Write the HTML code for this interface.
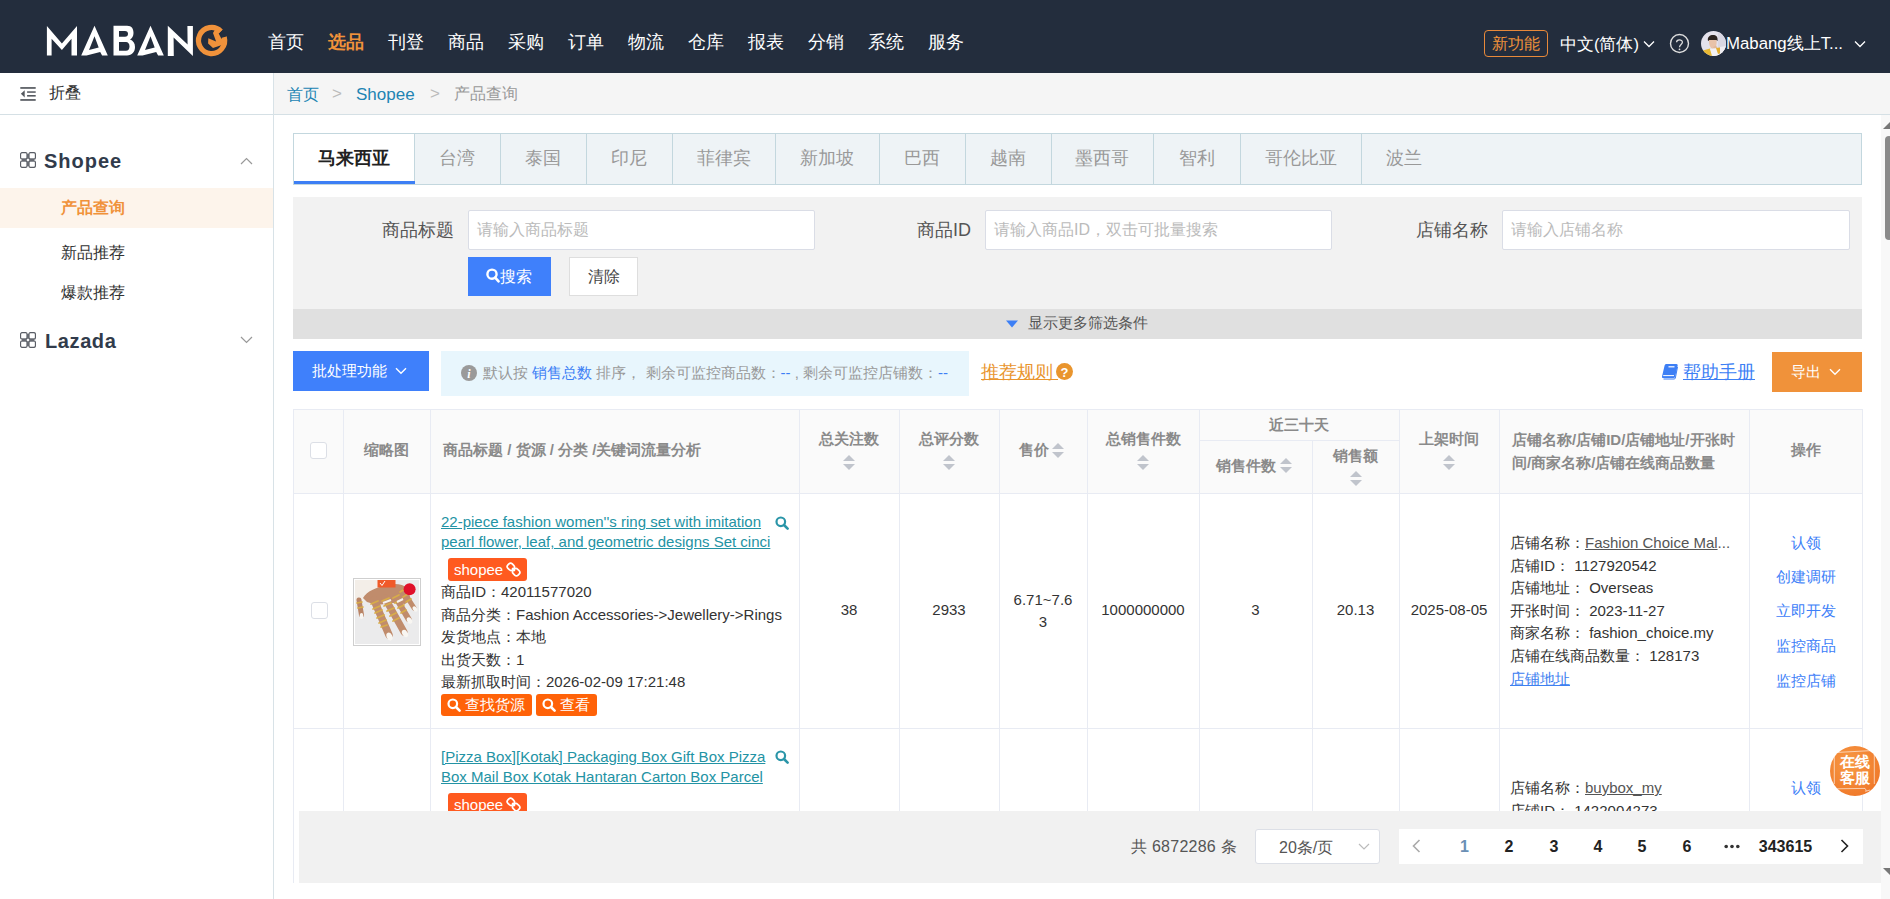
<!DOCTYPE html>
<html><head><meta charset="utf-8">
<style>
*{box-sizing:border-box;margin:0;padding:0}
html,body{width:1890px;height:899px;overflow:hidden;background:#fff;font-family:"Liberation Sans",sans-serif;color:#333}
.a{position:absolute;white-space:nowrap}
#hdr{position:absolute;left:0;top:0;width:1890px;height:73px;background:#232d3d}
.nav{position:absolute;top:30px;font-size:18px;line-height:24px;color:#fff}
.nav.on{color:#f0923a;font-weight:bold}
#side{position:absolute;left:0;top:73px;width:274px;height:826px;background:#fff;border-right:1px solid #d8e2e7}
#bc{position:absolute;left:274px;top:73px;width:1616px;height:42px;background:#f5f5f5;border-bottom:1px solid #d5e0e5}
</style></head><body>

<div id="hdr">
  <svg class="a" style="left:0;top:0" width="240" height="73" viewBox="0 0 240 73">
    <g fill="#fff">
      <polygon points="46.9,26.1 61.9,43.6 77,26.1 77,55.5 71.5,55.5 71.5,38.8 61.9,49.9 51.6,38.8 51.6,55.5 46.9,55.5"/>
      <path fill-rule="evenodd" d="M94.5,25.8 L81.2,55.4 L86.5,55.4 L100.2,52.1 L102.1,55.4 L107.8,55.4 Z M94.5,36.2 L89,49.9 L98.7,47.4 Z"/>
      <path fill-rule="evenodd" d="M113.5,25.8 H127 C132,25.8 133.5,29 133.5,33 C133.5,36 132,38.5 130,39.5 C133,40.5 135,43 135,47 C135,52 132,55.4 127,55.4 H113.5 Z M119,30.9 V36.8 H125 C127,36.8 128,35.5 128,33.8 C128,32 127,30.9 125,30.9 Z M119,42 V50.7 H126 C128,50.7 129.5,49 129.5,46.4 C129.5,43.6 128,42 126,42 Z"/>
      <path fill-rule="evenodd" d="M150.5,25.8 L137.2,55.4 L142.5,55.4 L156.2,52.1 L158.1,55.4 L163.8,55.4 Z M150.5,36.2 L145,49.9 L154.7,47.4 Z"/>
      <polygon points="167.8,25.8 187.6,44.5 187.4,26 192.9,26 192.9,56 173.6,37.4 173.8,56 167.8,56"/>
    </g>
    <path d="M224.25,37.1 A13.1,13.1 0 1 1 220.86,31.24" fill="none" stroke="#f0923b" stroke-width="5.2"/>
    <polygon fill="#f0923b" points="214.7,30 222.7,29.6 218.7,33.4 221.4,38.7 226.7,36.5 221.9,44.9 213,48 208.1,43.6 208.3,38.2 216.1,41.4 213,32.9"/>
  </svg>
  <div class="nav" style="left:268px">首页</div>
  <div class="nav on" style="left:328px">选品</div>
  <div class="nav" style="left:388px">刊登</div>
  <div class="nav" style="left:448px">商品</div>
  <div class="nav" style="left:508px">采购</div>
  <div class="nav" style="left:568px">订单</div>
  <div class="nav" style="left:628px">物流</div>
  <div class="nav" style="left:688px">仓库</div>
  <div class="nav" style="left:748px">报表</div>
  <div class="nav" style="left:808px">分销</div>
  <div class="nav" style="left:868px">系统</div>
  <div class="nav" style="left:928px">服务</div>

  <div class="a" style="left:1484px;top:30px;width:64px;height:27px;border:1px solid #e8893a;border-radius:4px;color:#f0923a;font-size:16px;line-height:25px;text-align:center">新功能</div>
  <div class="a" style="left:1560px;top:32px;font-size:16.5px;line-height:24px;color:#fff">中文(简体)</div>
  <svg class="a" style="left:1643px;top:40px" width="12" height="8" viewBox="0 0 12 8"><path d="M1,1.5 L6,6.5 L11,1.5" fill="none" stroke="#fff" stroke-width="1.3"/></svg>
  <svg class="a" style="left:1669px;top:33px" width="21" height="21" viewBox="0 0 21 21"><circle cx="10.5" cy="10.5" r="9" fill="none" stroke="#ddd" stroke-width="1.4"/><path d="M7.6,9.2 C7.6,6.2 13.4,6.2 13.4,9.2 C13.4,11.3 10.5,11.6 10.5,14.2" fill="none" stroke="#ddd" stroke-width="1.3"/><circle cx="10.5" cy="16.3" r="0.9" fill="#ddd"/></svg>
  <svg class="a" style="left:1701px;top:31px" width="25" height="25" viewBox="0 0 25 25"><defs><clipPath id="avc"><circle cx="12.5" cy="12.5" r="12.5"/></clipPath></defs><g clip-path="url(#avc)"><rect width="25" height="25" fill="#e4e2ec"/><rect x="17" y="0" width="8" height="25" fill="#d9d7e3"/><path d="M7,10 C6,5 10,3.5 13,4 C16,4.5 17,7 16.5,10 L15,9 L9,9 Z" fill="#2c2420"/><path d="M8,9 C8,14 9,17 12,18 C15,17 16,14 15.5,9 Z" fill="#e8c2a8"/><path d="M12,16 L15,14.5 L17,18 L14,19 Z" fill="#e2b898"/><path d="M0,20 L9,17.5 L12,25 L0,25 Z" fill="#e9b934"/><path d="M9,18 L16,17 L19,25 L11,25 Z" fill="#f3f1f4"/><path d="M15,17 L19,16.5 L20,22 L17,23 Z" fill="#e2ad30"/><path d="M19,16 L25,15 L25,25 L19,25 Z" fill="#efedf2"/></g></svg>
  <div class="a" style="left:1726px;top:32px;font-size:16.8px;line-height:24px;color:#fff">Mabang线上T...</div>
  <svg class="a" style="left:1854px;top:40px" width="12" height="8" viewBox="0 0 12 8"><path d="M1,1.5 L6,6.5 L11,1.5" fill="none" stroke="#fff" stroke-width="1.3"/></svg>
</div>

<div id="side">
  <svg class="a" style="left:20px;top:13px" width="16" height="16" viewBox="0 0 16 16"><g fill="#55595f"><rect x="0.3" y="1.1" width="15.4" height="1.7"/><rect x="7.1" y="5.3" width="8.6" height="1.5"/><rect x="7.1" y="9" width="8.6" height="1.6"/><rect x="0.3" y="13.1" width="15.4" height="1.7"/><polygon points="0.9,7.7 4.7,4.3 4.7,11.4"/></g></svg>
  <div class="a" style="left:49px;top:9px;font-size:16px;line-height:22px;color:#333">折叠</div>
  <div class="a" style="left:0;top:41px;width:273px;height:1px;background:#d5e0e5"></div>
  <svg class="a" style="left:20px;top:79px" width="16" height="16" viewBox="0 0 17 17"><path d="M7,2 H10 V15 H7 Z M2,7 H15 V10 H2 Z" fill="#8c8f95"/><circle cx="8.5" cy="8.5" r="1.3" fill="#fff"/><g fill="none" stroke="#5a5e66" stroke-width="1.25"><rect x="0.6" y="0.6" width="7" height="7" rx="1.8"/><rect x="9.4" y="0.6" width="7" height="7" rx="1.8"/><rect x="0.6" y="9.4" width="7" height="7" rx="1.8"/><rect x="9.4" y="9.4" width="7" height="7" rx="1.8"/></g></svg>
  <div class="a" style="left:44px;top:76px;font-size:20px;line-height:24px;font-weight:bold;color:#313b4b;letter-spacing:1px">Shopee</div>
  <svg class="a" style="left:240px;top:84px" width="13" height="8" viewBox="0 0 13 8"><path d="M1,7 L6.5,1.5 L12,7" fill="none" stroke="#999" stroke-width="1.2"/></svg>
  <div class="a" style="left:0;top:115px;width:273px;height:40px;background:#fdf4eb"></div>
  <div class="a" style="left:61px;top:124px;font-size:16px;line-height:22px;color:#f0923a;font-weight:bold">产品查询</div>
  <div class="a" style="left:61px;top:169px;font-size:16px;line-height:22px;color:#333">新品推荐</div>
  <div class="a" style="left:61px;top:209px;font-size:16px;line-height:22px;color:#333">爆款推荐</div>
  <svg class="a" style="left:20px;top:259px" width="16" height="16" viewBox="0 0 17 17"><path d="M7,2 H10 V15 H7 Z M2,7 H15 V10 H2 Z" fill="#8c8f95"/><circle cx="8.5" cy="8.5" r="1.3" fill="#fff"/><g fill="none" stroke="#5a5e66" stroke-width="1.25"><rect x="0.6" y="0.6" width="7" height="7" rx="1.8"/><rect x="9.4" y="0.6" width="7" height="7" rx="1.8"/><rect x="0.6" y="9.4" width="7" height="7" rx="1.8"/><rect x="9.4" y="9.4" width="7" height="7" rx="1.8"/></g></svg>
  <div class="a" style="left:45px;top:256px;font-size:20px;line-height:24px;font-weight:bold;color:#313b4b;letter-spacing:0.6px">Lazada</div>
  <svg class="a" style="left:240px;top:263px" width="13" height="8" viewBox="0 0 13 8"><path d="M1,1 L6.5,6.5 L12,1" fill="none" stroke="#999" stroke-width="1.2"/></svg>
</div>
<div id="bc">
  <div class="a" style="left:13px;top:11px;font-size:16px;line-height:22px;color:#2184b3">首页</div>
  <div class="a" style="left:58px;top:10px;font-size:17px;line-height:22px;color:#bbb">&gt;</div>
  <div class="a" style="left:82px;top:11px;font-size:17px;line-height:22px;color:#2184b3">Shopee</div>
  <div class="a" style="left:156px;top:10px;font-size:17px;line-height:22px;color:#bbb">&gt;</div>
  <div class="a" style="left:180px;top:10px;font-size:16px;line-height:22px;color:#999">产品查询</div>
</div>

<div class="a" style="left:293px;top:133px;width:1569px;height:52px;background:#eef3f6;border:1px solid #c3d7de"></div>
<div class="a" style="left:294px;top:134px;width:120px;height:50px;background:#fff"></div>
<div class="a" style="left:294px;top:181px;width:121px;height:3px;background:#3d7ff5;z-index:2"></div>
<div class="a" style="left:293px;top:134px;width:121px;text-align:center;font-size:18px;line-height:48px;font-weight:bold;color:#222">马来西亚</div>
<div class="a" style="left:414px;top:134px;width:1px;height:50px;background:#c3d7de"></div>
<div class="a" style="left:414px;top:134px;width:86px;text-align:center;font-size:18px;line-height:48px;color:#999">台湾</div>
<div class="a" style="left:500px;top:134px;width:1px;height:50px;background:#c3d7de"></div>
<div class="a" style="left:500px;top:134px;width:86px;text-align:center;font-size:18px;line-height:48px;color:#999">泰国</div>
<div class="a" style="left:586px;top:134px;width:1px;height:50px;background:#c3d7de"></div>
<div class="a" style="left:586px;top:134px;width:86px;text-align:center;font-size:18px;line-height:48px;color:#999">印尼</div>
<div class="a" style="left:672px;top:134px;width:1px;height:50px;background:#c3d7de"></div>
<div class="a" style="left:672px;top:134px;width:103px;text-align:center;font-size:18px;line-height:48px;color:#999">菲律宾</div>
<div class="a" style="left:775px;top:134px;width:1px;height:50px;background:#c3d7de"></div>
<div class="a" style="left:775px;top:134px;width:104px;text-align:center;font-size:18px;line-height:48px;color:#999">新加坡</div>
<div class="a" style="left:879px;top:134px;width:1px;height:50px;background:#c3d7de"></div>
<div class="a" style="left:879px;top:134px;width:86px;text-align:center;font-size:18px;line-height:48px;color:#999">巴西</div>
<div class="a" style="left:965px;top:134px;width:1px;height:50px;background:#c3d7de"></div>
<div class="a" style="left:965px;top:134px;width:86px;text-align:center;font-size:18px;line-height:48px;color:#999">越南</div>
<div class="a" style="left:1051px;top:134px;width:1px;height:50px;background:#c3d7de"></div>
<div class="a" style="left:1051px;top:134px;width:102px;text-align:center;font-size:18px;line-height:48px;color:#999">墨西哥</div>
<div class="a" style="left:1153px;top:134px;width:1px;height:50px;background:#c3d7de"></div>
<div class="a" style="left:1153px;top:134px;width:87px;text-align:center;font-size:18px;line-height:48px;color:#999">智利</div>
<div class="a" style="left:1240px;top:134px;width:1px;height:50px;background:#c3d7de"></div>
<div class="a" style="left:1240px;top:134px;width:121px;text-align:center;font-size:18px;line-height:48px;color:#999">哥伦比亚</div>
<div class="a" style="left:1361px;top:134px;width:1px;height:50px;background:#c3d7de"></div>
<div class="a" style="left:1361px;top:134px;width:86px;text-align:center;font-size:18px;line-height:48px;color:#999">波兰</div>
<div class="a" style="left:293px;top:197px;width:1569px;height:112px;background:#f2f2f2"></div>
<div class="a" style="left:382px;top:218px;font-size:18px;line-height:24px;color:#555">商品标题</div>
<div class="a" style="left:468px;top:210px;width:347px;height:40px;background:#fff;border:1px solid #dadde6;border-radius:2px"></div>
<div class="a" style="left:477px;top:219px;font-size:16px;line-height:22px;color:#bbb">请输入商品标题</div>
<div class="a" style="left:917px;top:218px;font-size:18px;line-height:24px;color:#555">商品ID</div>
<div class="a" style="left:985px;top:210px;width:347px;height:40px;background:#fff;border:1px solid #dadde6;border-radius:2px"></div>
<div class="a" style="left:994px;top:219px;font-size:16px;line-height:22px;color:#bbb">请输入商品ID，双击可批量搜索</div>
<div class="a" style="left:1416px;top:218px;font-size:18px;line-height:24px;color:#555">店铺名称</div>
<div class="a" style="left:1502px;top:210px;width:348px;height:40px;background:#fff;border:1px solid #dadde6;border-radius:2px"></div>
<div class="a" style="left:1511px;top:219px;font-size:16px;line-height:22px;color:#bbb">请输入店铺名称</div>
<div class="a" style="left:468px;top:257px;width:83px;height:39px;background:#3f80fb"></div>
<svg class="a" style="left:486px;top:268px" width="15" height="16" viewBox="0 0 15 16"><circle cx="6" cy="6.2" r="4.6" fill="none" stroke="#fff" stroke-width="2.4"/><path d="M9.2,9.6 L12.6,13.4" stroke="#fff" stroke-width="2.6" stroke-linecap="round"/></svg>
<div class="a" style="left:500px;top:266px;font-size:16px;line-height:22px;color:#fff">搜索</div>
<div class="a" style="left:569px;top:257px;width:69px;height:39px;background:#fff;border:1px solid #dedede"></div>
<div class="a" style="left:569px;top:266px;width:69px;text-align:center;font-size:16px;line-height:22px;color:#444">清除</div>
<div class="a" style="left:293px;top:309px;width:1569px;height:30px;background:#e0e0e0"></div>
<svg class="a" style="left:1006px;top:320px" width="12" height="8" viewBox="0 0 12 8"><polygon points="0,0.5 12,0.5 6,7.5" fill="#3d7ff5"/></svg>
<div class="a" style="left:1028px;top:313px;font-size:15px;line-height:20px;color:#555">显示更多筛选条件</div>
<div class="a" style="left:293px;top:351px;width:136px;height:40px;background:#3f80fb"></div>
<div class="a" style="left:312px;top:361px;font-size:15px;line-height:20px;color:#fff">批处理功能</div>
<svg class="a" style="left:395px;top:367px" width="12" height="8" viewBox="0 0 12 8"><path d="M1,1.2 L6,6.2 L11,1.2" fill="none" stroke="#fff" stroke-width="1.4"/></svg>
<div class="a" style="left:441px;top:351px;width:528px;height:45px;background:#e8f6fd"></div>
<svg class="a" style="left:461px;top:365px" width="16" height="16" viewBox="0 0 16 16"><circle cx="8" cy="8" r="8" fill="#9a9a9a"/><text x="8" y="12.8" font-size="12" font-weight="bold" font-style="italic" text-anchor="middle" fill="#fff" font-family="Liberation Serif">i</text></svg>
<div class="a" style="left:483px;top:363px;font-size:15px;line-height:20px;color:#999">默认按 <span style="color:#3d7ff5">销售总数</span> 排序， 剩余可监控商品数：<span style="color:#3d7ff5">--</span> , 剩余可监控店铺数：<span style="color:#3d7ff5">--</span></div>
<div class="a" style="left:981px;top:361px;font-size:18px;line-height:22px;color:#e9952e;text-decoration:underline">推荐规则&nbsp;</div>
<svg class="a" style="left:1056px;top:363px" width="17" height="17" viewBox="0 0 17 17"><circle cx="8.5" cy="8.5" r="8.5" fill="#e9952e"/><text x="8.5" y="13.5" font-size="13" font-weight="bold" text-anchor="middle" fill="#fff" font-family="Liberation Sans">?</text></svg>
<svg class="a" style="left:1661px;top:363px" width="18" height="17" viewBox="0 0 18 17"><path d="M5,1 H15.5 Q17,1 16.7,2.5 L14.2,13.5 Q13.9,15 12.5,15 H2 Q0.6,15 1,13.5 L3.6,2.5 Q4,1 5,1 Z" fill="#3d7ff5"/><path d="M7.5,3.8 H13.5" stroke="#fff" stroke-width="1.2"/><path d="M2.2,12.6 H13" stroke="#fff" stroke-width="1"/><path d="M16.5,4 L14.3,15.2 Q14,16 13,16 H2.5" fill="none" stroke="#3d7ff5" stroke-width="1"/></svg>
<div class="a" style="left:1683px;top:361px;font-size:17.6px;line-height:22px;color:#3d7ff5;text-decoration:underline">帮助手册</div>
<div class="a" style="left:1772px;top:352px;width:90px;height:40px;background:#f0923a"></div>
<div class="a" style="left:1791px;top:362px;font-size:15px;line-height:20px;color:#fff">导出</div>
<svg class="a" style="left:1829px;top:368px" width="12" height="8" viewBox="0 0 12 8"><path d="M1,1.2 L6,6.2 L11,1.2" fill="none" stroke="#fff" stroke-width="1.4"/></svg>

<div class="a" style="left:293px;top:409px;width:1569px;height:85px;background:#fafafa"></div>
<div class="a" style="left:293px;top:409px;width:1569px;height:1px;background:#e8ebf3"></div>
<div class="a" style="left:293px;top:493px;width:1569px;height:1px;background:#e8ebf3"></div>
<div class="a" style="left:293px;top:728px;width:1569px;height:1px;background:#e8ebf3"></div>
<div class="a" style="left:1199px;top:440px;width:200px;height:1px;background:#e8ebf3"></div>
<div class="a" style="left:293px;top:409px;width:1px;height:474px;background:#e8ebf3"></div>
<div class="a" style="left:343px;top:409px;width:1px;height:402px;background:#e8ebf3"></div>
<div class="a" style="left:430px;top:409px;width:1px;height:402px;background:#e8ebf3"></div>
<div class="a" style="left:799px;top:409px;width:1px;height:402px;background:#e8ebf3"></div>
<div class="a" style="left:899px;top:409px;width:1px;height:402px;background:#e8ebf3"></div>
<div class="a" style="left:999px;top:409px;width:1px;height:402px;background:#e8ebf3"></div>
<div class="a" style="left:1087px;top:409px;width:1px;height:402px;background:#e8ebf3"></div>
<div class="a" style="left:1199px;top:409px;width:1px;height:402px;background:#e8ebf3"></div>
<div class="a" style="left:1399px;top:409px;width:1px;height:402px;background:#e8ebf3"></div>
<div class="a" style="left:1499px;top:409px;width:1px;height:402px;background:#e8ebf3"></div>
<div class="a" style="left:1749px;top:409px;width:1px;height:402px;background:#e8ebf3"></div>
<div class="a" style="left:1862px;top:409px;width:1px;height:402px;background:#e8ebf3"></div>
<div class="a" style="left:1312px;top:440px;width:1px;height:371px;background:#e8ebf3"></div>
<div class="a" style="left:310px;top:442px;width:17px;height:17px;background:#fff;border:1px solid #dcdfe6;border-radius:3px"></div>
<div class="a" style="left:343px;top:440px;width:87px;text-align:center;font-size:15px;line-height:20px;font-weight:bold;color:#8a8a8a">缩略图</div>
<div class="a" style="left:443px;top:440px;font-size:15px;line-height:20px;font-weight:bold;color:#8a8a8a">商品标题 / 货源 / 分类 /关键词流量分析</div>
<div class="a" style="left:799px;top:429px;width:100px;text-align:center;font-size:15px;line-height:20px;font-weight:bold;color:#8a8a8a">总关注数</div><svg class="a" style="left:843px;top:455px" width="12" height="16" viewBox="0 0 12 16"><polygon points="6,0 12,6 0,6" fill="#c0c4cc"/><polygon points="0,9 12,9 6,15" fill="#c0c4cc"/></svg>
<div class="a" style="left:899px;top:429px;width:100px;text-align:center;font-size:15px;line-height:20px;font-weight:bold;color:#8a8a8a">总评分数</div><svg class="a" style="left:943px;top:455px" width="12" height="16" viewBox="0 0 12 16"><polygon points="6,0 12,6 0,6" fill="#c0c4cc"/><polygon points="0,9 12,9 6,15" fill="#c0c4cc"/></svg>
<div class="a" style="left:1019px;top:440px;font-size:15px;line-height:20px;font-weight:bold;color:#8a8a8a">售价</div><svg class="a" style="left:1052px;top:443px" width="12" height="16" viewBox="0 0 12 16"><polygon points="6,0 12,6 0,6" fill="#c0c4cc"/><polygon points="0,9 12,9 6,15" fill="#c0c4cc"/></svg>
<div class="a" style="left:1087px;top:429px;width:112px;text-align:center;font-size:15px;line-height:20px;font-weight:bold;color:#8a8a8a">总销售件数</div><svg class="a" style="left:1137px;top:455px" width="12" height="16" viewBox="0 0 12 16"><polygon points="6,0 12,6 0,6" fill="#c0c4cc"/><polygon points="0,9 12,9 6,15" fill="#c0c4cc"/></svg>
<div class="a" style="left:1199px;top:415px;width:200px;text-align:center;font-size:15px;line-height:20px;font-weight:bold;color:#8a8a8a">近三十天</div>
<div class="a" style="left:1216px;top:456px;font-size:15px;line-height:20px;font-weight:bold;color:#8a8a8a">销售件数</div><svg class="a" style="left:1280px;top:458px" width="12" height="16" viewBox="0 0 12 16"><polygon points="6,0 12,6 0,6" fill="#c0c4cc"/><polygon points="0,9 12,9 6,15" fill="#c0c4cc"/></svg>
<div class="a" style="left:1312px;top:446px;width:87px;text-align:center;font-size:15px;line-height:20px;font-weight:bold;color:#8a8a8a">销售额</div><svg class="a" style="left:1350px;top:471px" width="12" height="16" viewBox="0 0 12 16"><polygon points="6,0 12,6 0,6" fill="#c0c4cc"/><polygon points="0,9 12,9 6,15" fill="#c0c4cc"/></svg>
<div class="a" style="left:1399px;top:429px;width:100px;text-align:center;font-size:15px;line-height:20px;font-weight:bold;color:#8a8a8a">上架时间</div><svg class="a" style="left:1443px;top:455px" width="12" height="16" viewBox="0 0 12 16"><polygon points="6,0 12,6 0,6" fill="#c0c4cc"/><polygon points="0,9 12,9 6,15" fill="#c0c4cc"/></svg>
<div class="a" style="left:1512px;top:428px;font-size:15px;line-height:23px;font-weight:bold;color:#8a8a8a">店铺名称/店铺ID/店铺地址/开张时<br>间/商家名称/店铺在线商品数量</div>
<div class="a" style="left:1749px;top:440px;width:113px;text-align:center;font-size:15px;line-height:20px;font-weight:bold;color:#8a8a8a">操作</div>
<div class="a" style="left:311px;top:602px;width:17px;height:17px;background:#fff;border:1px solid #dcdfe6;border-radius:3px"></div>
<svg class="a" style="left:353px;top:578px" width="68" height="68" viewBox="0 0 68 68">
<rect x="0.5" y="0.5" width="67" height="67" fill="#fff" stroke="#cfcfcf"/>
<rect x="2" y="2" width="64" height="64" fill="#ebebec"/>
<path d="M2,2 H28 L24,12 L16,20 L8,24 L2,26 Z" fill="#f3eee8"/>
<path d="M10,20 C14,13 24,9 34,7 C42,5 50,6 54,10 L58,22 L52,26 L40,25 L24,27 L14,24 Z" fill="#c08c6c"/>
<g stroke-linecap="round" fill="none">
<path d="M6,22 L8.5,37" stroke="#b98466" stroke-width="5"/>
<path d="M21,22 L36,57" stroke="#c08c6c" stroke-width="7.5"/>
<path d="M32,20 L51,54" stroke="#c08c6c" stroke-width="7"/>
<path d="M42,18 L55.5,41" stroke="#c08c6c" stroke-width="6"/>
<path d="M49,11 L61,30" stroke="#c08c6c" stroke-width="5"/>
</g>
<g fill="#f8f6f2">
<ellipse cx="36.5" cy="58.5" rx="2.8" ry="4.2" transform="rotate(-24 36.5 58.5)"/>
<ellipse cx="52" cy="55.5" rx="2.7" ry="4" transform="rotate(-30 52 55.5)"/>
<ellipse cx="56.5" cy="42.5" rx="2.4" ry="3.5" transform="rotate(-30 56.5 42.5)"/>
<ellipse cx="62" cy="31" rx="2" ry="3" transform="rotate(-32 62 31)"/>
<ellipse cx="8.5" cy="38" rx="1.8" ry="3"/>
</g>
<g stroke="#d8ad48" stroke-width="1.7" fill="none" stroke-linecap="round">
<path d="M18,26 L25,23"/><path d="M20,31 L27,28"/><path d="M22,35 L29,32"/><path d="M24,40 L31,37"/><path d="M26,45 L33,42"/><path d="M28,49 L34,47"/>
<path d="M29,23 L36,20"/><path d="M31,28 L38,25"/><path d="M34,33 L41,30"/><path d="M37,38 L43,35"/><path d="M40,43 L46,40"/>
<path d="M40,20 L46,17"/><path d="M42,25 L48,22"/><path d="M45,30 L51,27"/><path d="M48,35 L53,32"/>
<path d="M47,14 L52,11"/><path d="M50,19 L55,16"/><path d="M53,24 L58,21"/>
<path d="M4,25 L9,24"/><path d="M5,30 L10,29"/>
</g>
<path d="M30,25 L38,22" stroke="#f4f2ee" stroke-width="2"/>
<path d="M44,24 L50,21" stroke="#f4f2ee" stroke-width="2"/>
<rect x="24.5" y="2" width="18" height="7.5" fill="#f05a28"/>
<path d="M27,5 L29,7.5 L32,3" stroke="#fff" stroke-width="1" fill="none"/>
<circle cx="56.6" cy="11.3" r="6" fill="#e0102a"/>
</svg>
<div class="a" style="left:441px;top:512px;font-size:15px;line-height:20px;color:#2393a4;text-decoration:underline">22-piece fashion women''s ring set with imitation<br>pearl flower, leaf, and geometric designs Set cinci</div>
<svg class="a" style="left:775px;top:516px" width="14" height="14" viewBox="0 0 14 14"><circle cx="5.8" cy="5.8" r="4.3" fill="none" stroke="#2a95a8" stroke-width="2.2"/><path d="M9,9 L12.6,12.6" stroke="#2a95a8" stroke-width="2.6" stroke-linecap="round"/></svg>
<div class="a" style="left:448px;top:558px;width:79px;height:23px;background:#ff5a1f;border-radius:3px"></div><div class="a" style="left:454px;top:559px;font-size:15px;line-height:21px;color:#fff">shopee</div><svg class="a" style="left:506px;top:562px" width="15" height="15" viewBox="0 0 15 15"><g fill="none" stroke="#fff" stroke-width="1.7" transform="rotate(-45 7.5 7.5)"><rect x="4.4" y="0.3" width="6.2" height="6.8" rx="2.4"/><rect x="4.4" y="7.9" width="6.2" height="6.8" rx="2.4"/></g><path d="M7.5,5.5 L7.5,9.5" stroke="#fff" stroke-width="1.5" transform="rotate(-45 7.5 7.5)"/></svg>
<div class="a" style="left:441px;top:581px;font-size:15px;line-height:22.5px;color:#333">商品ID：42011577020<br>商品分类：Fashion Accessories-&gt;Jewellery-&gt;Rings<br>发货地点：本地<br>出货天数：1<br>最新抓取时间：2026-02-09 17:21:48</div>
<div class="a" style="left:441px;top:694px;width:91px;height:22px;background:#ff6208;border-radius:3px"></div><svg class="a" style="left:447px;top:698px" width="14" height="14" viewBox="0 0 14 14"><circle cx="5.8" cy="5.8" r="4.3" fill="none" stroke="#fff" stroke-width="2.2"/><path d="M9,9 L12.6,12.6" stroke="#fff" stroke-width="2.6" stroke-linecap="round"/></svg><div class="a" style="left:465px;top:695px;font-size:15px;line-height:20px;color:#fff">查找货源</div>
<div class="a" style="left:536px;top:694px;width:61px;height:22px;background:#ff6208;border-radius:3px"></div><svg class="a" style="left:542px;top:698px" width="14" height="14" viewBox="0 0 14 14"><circle cx="5.8" cy="5.8" r="4.3" fill="none" stroke="#fff" stroke-width="2.2"/><path d="M9,9 L12.6,12.6" stroke="#fff" stroke-width="2.6" stroke-linecap="round"/></svg><div class="a" style="left:560px;top:695px;font-size:15px;line-height:20px;color:#fff">查看</div>
<div class="a" style="left:799px;top:600px;width:100px;text-align:center;font-size:15px;line-height:20px;color:#333">38</div>
<div class="a" style="left:899px;top:600px;width:100px;text-align:center;font-size:15px;line-height:20px;color:#333">2933</div>
<div class="a" style="left:1087px;top:600px;width:112px;text-align:center;font-size:15px;line-height:20px;color:#333">1000000000</div>
<div class="a" style="left:1199px;top:600px;width:113px;text-align:center;font-size:15px;line-height:20px;color:#333">3</div>
<div class="a" style="left:1312px;top:600px;width:87px;text-align:center;font-size:15px;line-height:20px;color:#333">20.13</div>
<div class="a" style="left:1399px;top:600px;width:100px;text-align:center;font-size:15px;line-height:20px;color:#333">2025-08-05</div>
<div class="a" style="left:999px;top:589px;width:88px;text-align:center;font-size:15px;line-height:22px;color:#333">6.71~7.6<br>3</div>
<div class="a" style="left:1510px;top:532px;font-size:15px;line-height:22.6px;color:#333">店铺名称：<span style="color:#555;text-decoration:underline">Fashion Choice Mal</span><span style="color:#555">...</span><br>店铺ID： 1127920542<br>店铺地址： Overseas<br>开张时间： 2023-11-27<br>商家名称： fashion_choice.my<br>店铺在线商品数量： 128173<br><span style="color:#3d80f0;text-decoration:underline">店铺地址</span></div>
<div class="a" style="left:1749px;top:533px;width:113px;font-size:15px;line-height:20px;color:#3d80f8;text-align:center">认领</div>
<div class="a" style="left:1749px;top:567px;width:113px;font-size:15px;line-height:20px;color:#3d80f8;text-align:center">创建调研</div>
<div class="a" style="left:1749px;top:601px;width:113px;font-size:15px;line-height:20px;color:#3d80f8;text-align:center">立即开发</div>
<div class="a" style="left:1749px;top:636px;width:113px;font-size:15px;line-height:20px;color:#3d80f8;text-align:center">监控商品</div>
<div class="a" style="left:1749px;top:671px;width:113px;font-size:15px;line-height:20px;color:#3d80f8;text-align:center">监控店铺</div>
<div class="a" style="left:441px;top:747px;font-size:15px;line-height:20px;color:#2393a4;text-decoration:underline">[Pizza Box][Kotak] Packaging Box Gift Box Pizza<br>Box Mail Box Kotak Hantaran Carton Box Parcel</div>
<svg class="a" style="left:775px;top:750px" width="14" height="14" viewBox="0 0 14 14"><circle cx="5.8" cy="5.8" r="4.3" fill="none" stroke="#2a95a8" stroke-width="2.2"/><path d="M9,9 L12.6,12.6" stroke="#2a95a8" stroke-width="2.6" stroke-linecap="round"/></svg>
<div class="a" style="left:448px;top:793px;width:79px;height:23px;background:#ff5a1f;border-radius:3px"></div><div class="a" style="left:454px;top:794px;font-size:15px;line-height:21px;color:#fff">shopee</div><svg class="a" style="left:506px;top:797px" width="15" height="15" viewBox="0 0 15 15"><g fill="none" stroke="#fff" stroke-width="1.7" transform="rotate(-45 7.5 7.5)"><rect x="4.4" y="0.3" width="6.2" height="6.8" rx="2.4"/><rect x="4.4" y="7.9" width="6.2" height="6.8" rx="2.4"/></g><path d="M7.5,5.5 L7.5,9.5" stroke="#fff" stroke-width="1.5" transform="rotate(-45 7.5 7.5)"/></svg>
<div class="a" style="left:1510px;top:777px;font-size:15px;line-height:22.6px;color:#333">店铺名称：<span style="color:#555;text-decoration:underline">buybox_my</span><br>店铺ID： 1422004273</div>
<div class="a" style="left:1749px;top:778px;width:113px;font-size:15px;line-height:20px;color:#3d80f8;text-align:center">认领</div>
<div class="a" style="left:299px;top:811px;width:1582px;height:72px;background:#f1f1f1"></div>
<div class="a" style="left:1131px;top:836px;font-size:16px;line-height:22px;color:#555;letter-spacing:0.25px">共 6872286 条</div>
<div class="a" style="left:1255px;top:829px;width:125px;height:35px;background:#fff;border:1px solid #dcdfe6;border-radius:3px"></div>
<div class="a" style="left:1279px;top:837px;font-size:16px;line-height:22px;color:#555">20条/页</div>
<svg class="a" style="left:1358px;top:843px" width="12" height="7" viewBox="0 0 12 7"><path d="M1,1 L6,6 L11,1" fill="none" stroke="#bbb" stroke-width="1.2"/></svg>
<div class="a" style="left:1399px;top:829px;width:464px;height:35px;background:#fff"></div>
<svg class="a" style="left:1412px;top:839px" width="9" height="14" viewBox="0 0 9 14"><path d="M7.5,1 L1.5,7 L7.5,13" fill="none" stroke="#aaa" stroke-width="1.6"/></svg>
<svg class="a" style="left:1840px;top:839px" width="9" height="14" viewBox="0 0 9 14"><path d="M1.5,1 L7.5,7 L1.5,13" fill="none" stroke="#222" stroke-width="1.6"/></svg>
<div class="a" style="left:1424.5px;top:836px;width:80px;text-align:center;font-size:16px;line-height:22px;font-weight:bold;color:#6a8fb5">1</div>
<div class="a" style="left:1469px;top:836px;width:80px;text-align:center;font-size:16px;line-height:22px;font-weight:bold;color:#222">2</div>
<div class="a" style="left:1514px;top:836px;width:80px;text-align:center;font-size:16px;line-height:22px;font-weight:bold;color:#222">3</div>
<div class="a" style="left:1558px;top:836px;width:80px;text-align:center;font-size:16px;line-height:22px;font-weight:bold;color:#222">4</div>
<div class="a" style="left:1602px;top:836px;width:80px;text-align:center;font-size:16px;line-height:22px;font-weight:bold;color:#222">5</div>
<div class="a" style="left:1647px;top:836px;width:80px;text-align:center;font-size:16px;line-height:22px;font-weight:bold;color:#222">6</div>
<div class="a" style="left:1745.5px;top:836px;width:80px;text-align:center;font-size:16px;line-height:22px;font-weight:bold;color:#222">343615</div>
<svg class="a" style="left:1724px;top:844px" width="16" height="5" viewBox="0 0 16 5"><circle cx="2.2" cy="2.5" r="1.8" fill="#333"/><circle cx="8" cy="2.5" r="1.8" fill="#333"/><circle cx="13.8" cy="2.5" r="1.8" fill="#333"/></svg>
<div class="a" style="left:1830px;top:746px;width:50px;height:50px;border-radius:50%;background:radial-gradient(circle at 40% 35%,#f79a45,#ee6f22)"></div>
<svg class="a" style="left:1830px;top:746px" width="50" height="50" viewBox="0 0 50 50"><g fill="none" stroke="rgba(255,255,255,0.6)" stroke-width="1"><path d="M6,6.5 L43,4.5"/><path d="M4.3,9 L4.3,38"/><path d="M44.3,8 L44.3,38"/><path d="M6,42.8 L35,42.4 Q37,44.5 35.5,45.3 L40,44"/></g></svg>
<div class="a" style="left:1838px;top:754px;width:34px;text-align:center;font-size:15px;line-height:16px;font-weight:bold;color:#fff;letter-spacing:0.5px">在线<br>客服</div>
<div class="a" style="left:1881px;top:115px;width:9px;height:784px;background:#f8f8f8"></div>
<svg class="a" style="left:1883px;top:122px" width="7" height="7" viewBox="0 0 7 7"><polygon points="7,0 7,7 0,7" fill="#777"/></svg>
<div class="a" style="left:1885px;top:136px;width:8px;height:104px;background:#8a8a8a;border-radius:4px"></div>
<svg class="a" style="left:1883px;top:868px" width="7" height="7" viewBox="0 0 7 7"><polygon points="0,0 7,0 7,7" fill="#777"/></svg>

</body></html>
